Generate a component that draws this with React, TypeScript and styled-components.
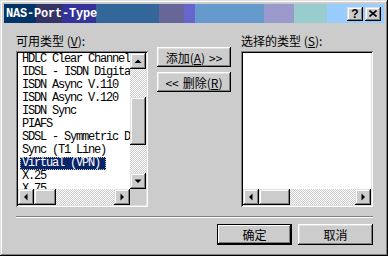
import styled, { createGlobalStyle } from "styled-components";

const GlobalStyle = createGlobalStyle`
  html, body {
    margin: 0;
    padding: 0;
    background: #cccccc;
  }
  body {
    font-family: "Noto Sans CJK SC", "Liberation Sans", sans-serif;
    font-size: 12px;
    color: #000;
  }
`;

const raised = `
  background: #cccccc;
  box-shadow: inset -1px -1px #000, inset 1px 1px #dfdfdf,
    inset -2px -2px #808080, inset 2px 2px #fff;
`;

const checker = `
  background-color: #cccccc;
  background-image: repeating-conic-gradient(#ffffff 0 25%, #cccccc 0 50%);
  background-size: 2px 2px;
`;

const Window = styled.div`
  width: 388px;
  height: 256px;
  box-sizing: border-box;
  padding: 4px;
  display: flex;
  flex-direction: column;
  background: #cccccc;
  box-shadow: inset -1px -1px #000, inset 1px 1px #dfdfdf,
    inset -2px -2px #808080, inset 2px 2px #fff;
`;

const TitleBar = styled.div`
  height: 19px;
  display: flex;
  align-items: center;
  gap: 2px;
  padding: 0 3px 0 2px;
  background: linear-gradient(
    to right,
    #003366 0 32px,
    #333366 32px 58px,
    #333399 58px 92px,
    #336699 92px 155px,
    #666699 155px 180px,
    #6666cc 180px 191px,
    #6699cc 191px 260px,
    #9999cc 260px 290px,
    #99cccc 290px 323px,
    #99ccff 323px 100%
  );
`;

const TitleText = styled.div`
  flex: 1;
  color: #fff;
  font: bold 12px "Liberation Mono", monospace;
  letter-spacing: -0.2px;
`;

const TitleButton = styled.div`
  ${raised}
  width: 16px;
  height: 14px;
  display: flex;
  align-items: center;
  justify-content: center;
  font: bold 12px "Liberation Sans", sans-serif;
  line-height: 14px;
`;

const Body = styled.div`
  flex: 1;
  display: flex;
  flex-direction: column;
  padding: 11px 11px 0 12px;
`;

const Columns = styled.div`
  display: grid;
  grid-template-columns: 132px 93px 132px;
`;

const Column = styled.div`
  display: flex;
  flex-direction: column;
`;

const Label = styled.div`
  height: 17px;
  line-height: 14px;
  white-space: nowrap;
  u {
    text-decoration: underline;
  }
`;

const ListBox = styled.div`
  height: 156px;
  box-sizing: border-box;
  padding: 2px;
  background: #fff;
  box-shadow: inset 1px 1px #808080, inset -1px -1px #fff,
    inset 2px 2px #000, inset -2px -2px #dfdfdf;
  display: grid;
  grid-template-columns: 1fr auto;
  grid-template-rows: 1fr auto;
`;

const Items = styled.div`
  overflow: hidden;
  font: 12px "Liberation Mono", monospace;
  letter-spacing: -1.2px;
`;

const Item = styled.div<{ $selected?: boolean }>`
  height: 13px;
  line-height: 13px;
  width: fit-content;
  margin-left: 2px;
  padding: 0 6px 0 2px;
  box-sizing: border-box;
  white-space: nowrap;
  background: ${(p) => (p.$selected ? "#0a246a" : "transparent")};
  color: ${(p) => (p.$selected ? "#fff" : "#000")};
  outline: ${(p) => (p.$selected ? "1px dotted #c8c8a0" : "none")};
  outline-offset: -1px;
`;

const VScroll = styled.div`
  grid-column: 2;
  grid-row: 1;
  width: 16px;
  display: flex;
  flex-direction: column;
`;

const HScroll = styled.div<{ $full?: boolean }>`
  grid-row: 2;
  grid-column: ${(p) => (p.$full ? "1 / 3" : "1")};
  height: 16px;
  display: flex;
`;

const Corner = styled.div`
  grid-row: 2;
  grid-column: 2;
  width: 16px;
  height: 16px;
  background: #cccccc;
`;

const ArrowButton = styled.div`
  ${raised}
  width: 16px;
  height: 16px;
  flex: none;
  display: flex;
  align-items: center;
  justify-content: center;
`;

const Track = styled.div<{ $vertical?: boolean }>`
  ${checker}
  flex: 1;
  display: flex;
  flex-direction: ${(p) => (p.$vertical ? "column" : "row")};
`;

const Thumb = styled.div<{ $vertical?: boolean; $offset: number; $size: number }>`
  ${raised}
  flex: none;
  width: ${(p) => (p.$vertical ? "16px" : `${p.$size}px`)};
  height: ${(p) => (p.$vertical ? `${p.$size}px` : "16px")};
  margin-top: ${(p) => (p.$vertical ? `${p.$offset}px` : "0")};
  margin-left: ${(p) => (p.$vertical ? "0" : `${p.$offset}px`)};
`;

const MiddleColumn = styled.div`
  display: flex;
  flex-direction: column;
  gap: 5px;
  padding: 13px 0 0 9px;
`;

const PushButton = styled.div<{ $default?: boolean; $w: number; $h: number }>`
  background: #cccccc;
  width: ${(p) => p.$w}px;
  height: ${(p) => p.$h}px;
  box-sizing: border-box;
  display: flex;
  align-items: center;
  justify-content: center;
  gap: 4px;
  white-space: nowrap;
  box-shadow: ${(p) =>
    p.$default
      ? "inset 0 0 0 1px #000, inset -2px -2px #000, inset 2px 2px #fff, inset -3px -3px #808080"
      : "inset -1px -1px #000, inset 1px 1px #fff, inset -2px -2px #808080, inset 2px 2px #dfdfdf"};
  u {
    text-decoration: underline;
  }
`;

const Separator = styled.div`
  margin-top: 9px;
  border-top: 1px solid #808080;
  border-bottom: 1px solid #fff;
`;

const Footer = styled.div`
  margin-top: 6px;
  display: flex;
  justify-content: flex-end;
  gap: 6px;
`;

type Dir = "up" | "down" | "left" | "right";

const arrowPoints: Record<Dir, string> = {
  up: "4.5,10 11.5,10 8,6.5",
  down: "4.5,6.5 11.5,6.5 8,10",
  left: "9.5,4.5 9.5,11.5 6,8",
  right: "6.5,4.5 6.5,11.5 10,8",
};

const Arrow = ({ dir }: { dir: Dir }) => (
  <ArrowButton>
    <svg width="16" height="16" viewBox="0 0 16 16">
      <polygon points={arrowPoints[dir]} fill="#000" />
    </svg>
  </ArrowButton>
);

const available = [
  "HDLC Clear Channel",
  "IDSL - ISDN Digital",
  "ISDN Async V.110",
  "ISDN Async V.120",
  "ISDN Sync",
  "PIAFS",
  "SDSL - Symmetric DSL",
  "Sync (T1 Line)",
  "Virtual (VPN)",
  "X.25",
  "X.75",
];

const App = () => {
  return (
    <>
      <GlobalStyle />
      <Window>
        <TitleBar>
          <TitleText>NAS-Port-Type</TitleText>
          <TitleButton>?</TitleButton>
          <TitleButton>
            <svg width="8" height="7" viewBox="0 0 8 7">
              <path d="M0.5 0.5 L7.5 6.5 M7.5 0.5 L0.5 6.5" stroke="#000" strokeWidth="1.6" />
            </svg>
          </TitleButton>
        </TitleBar>
        <Body>
          <Columns>
            <Column>
              <Label>
                可用类型 (<u>V</u>):
              </Label>
              <ListBox>
                <Items>
                  {available.map((name) => (
                    <Item key={name} $selected={name === "Virtual (VPN)"}>
                      {name}
                    </Item>
                  ))}
                </Items>
                <VScroll>
                  <Arrow dir="up" />
                  <Track $vertical>
                    <Thumb $vertical $offset={28} $size={48} />
                  </Track>
                  <Arrow dir="down" />
                </VScroll>
                <HScroll>
                  <Arrow dir="left" />
                  <Track>
                    <Thumb $offset={0} $size={22} />
                  </Track>
                  <Arrow dir="right" />
                </HScroll>
                <Corner />
              </ListBox>
            </Column>
            <MiddleColumn>
              <PushButton $w={74} $h={20}>
                <span>
                  添加(<u>A</u>)
                </span>
                <span>&gt;&gt;</span>
              </PushButton>
              <PushButton $w={74} $h={20}>
                <span>&lt;&lt;</span>
                <span>
                  删除(<u>R</u>)
                </span>
              </PushButton>
            </MiddleColumn>
            <Column>
              <Label>
                选择的类型 (<u>S</u>):
              </Label>
              <ListBox>
                <Items />
                <HScroll $full>
                  <Arrow dir="left" />
                  <Track>
                    <Thumb $offset={0} $size={31} />
                  </Track>
                  <Arrow dir="right" />
                </HScroll>
              </ListBox>
            </Column>
          </Columns>
          <Separator />
          <Footer>
            <PushButton $default $w={75} $h={21}>
              确定
            </PushButton>
            <PushButton $w={75} $h={21}>
              取消
            </PushButton>
          </Footer>
        </Body>
      </Window>
    </>
  );
};

export default App;
